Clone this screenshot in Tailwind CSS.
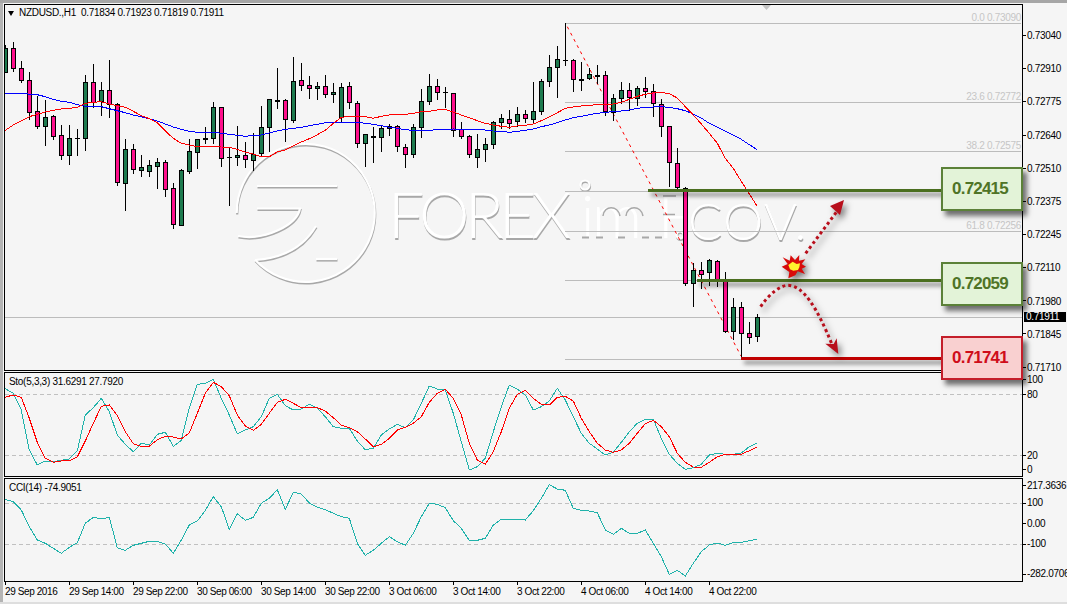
<!DOCTYPE html>
<html lang="en">
<head>
    <meta charset="UTF-8">
    <title>NZDUSD H1</title>
    <script src="https://cdn.jsdelivr.net/npm/@tailwindcss/browser@4"></script>
</head>
<body class="bg-[#f5f5f5] overflow-hidden">
<div class="relative w-[1067px] h-[604px] flex flex-col overflow-hidden text-[10px] leading-3 tracking-[-0.3px] text-black font-['Liberation_Sans',sans-serif]">
    <div class="h-[3px] bg-[#a6a6a6] shrink-0"></div>

    <div class="flex flex-1 border-l-[3px] border-[#b4b4b4] pt-px">
        <!-- panes -->
        <div class="w-[1019px] ml-px shrink-0 flex flex-col">
            <div class="h-[367px] border border-black pl-[3px] pt-[2px]">
                <div class="flex items-center gap-[5px] whitespace-pre">
                    <span class="w-0 h-0 border-x-[3.5px] border-x-transparent border-t-[5px] border-t-black"></span>
                    <span>NZDUSD.,H1  0.71834 0.71923 0.71819 0.71911</span>
                </div>
            </div>
            <div class="h-[105px] mt-px border border-black pl-1 pt-[3px]">Sto(5,3,3) 31.6291 27.7920</div>
            <div class="h-[104px] mt-px border border-black pl-1 pt-[3px]">CCI(14) -74.9051</div>
            <div class="flex pl-px pt-1 whitespace-nowrap tracking-[-0.4px]">
                <span class="w-16 shrink-0">29 Sep 2016</span>
                <span class="w-16 shrink-0">29 Sep 14:00</span>
                <span class="w-16 shrink-0">29 Sep 22:00</span>
                <span class="w-16 shrink-0">30 Sep 06:00</span>
                <span class="w-16 shrink-0">30 Sep 14:00</span>
                <span class="w-16 shrink-0">30 Sep 22:00</span>
                <span class="w-16 shrink-0">3 Oct 06:00</span>
                <span class="w-16 shrink-0">3 Oct 14:00</span>
                <span class="w-16 shrink-0">3 Oct 22:00</span>
                <span class="w-16 shrink-0">4 Oct 06:00</span>
                <span class="w-16 shrink-0">4 Oct 14:00</span>
                <span class="w-16 shrink-0">4 Oct 22:00</span>
            </div>
        </div>

        <!-- price axis -->
        <div class="flex-1 pl-[4px] whitespace-nowrap">
            <div class="h-[344px] mt-[26px] flex flex-col justify-between">
                <span>0.73040</span><span>0.72910</span><span>0.72775</span><span>0.72640</span>
                <span>0.72510</span><span>0.72375</span><span>0.72245</span><span>0.72110</span>
                <span>0.71980</span><span>0.71845</span><span>0.71710</span>
            </div>
            <div class="flex flex-col">
                <span>100</span>
                <span class="mt-[3px]">80</span>
                <span class="mt-[49px]">20</span>
                <span class="mt-[2px]">0</span>
                <span class="mt-[4px]">217.3636</span>
                <span class="mt-[5px]">100</span>
                <span class="mt-[9px]">0.00</span>
                <span class="mt-[8px]">-100</span>
                <span class="mt-[18px]">-282.0706</span>
            </div>
        </div>
    </div>

    <div class="h-[2px] bg-[#dedede] shrink-0"></div>

    <!-- chart drawing, in window coordinates -->
    <svg class="absolute top-0 left-0" width="1067" height="604" viewBox="0 0 1067 604" fill="none">
        <defs>
            <clipPath id="main-clip"><rect x="5" y="5" width="1017" height="365"></rect></clipPath>
            <clipPath id="low-clip"><rect x="5" y="373" width="1017" height="208"></rect></clipPath>
            <g id="mark" fill="none" stroke="currentColor" stroke-width="2.2">
                <path d="M236.7 213A69 69 0 1 1 255 259.7"></path>
                <path d="M257 186H337"></path>
                <path d="M257 208.5H300C297 225 265 241 238 236"></path>
                <path d="M316 226C305 245 285 258 255 260"></path>
                <path d="M316 259H337"></path>
                <circle cx="585" cy="185" r="4.5"></circle>
                <circle cx="680" cy="235" r="3.5"></circle>
                <g fill="currentColor" stroke="none" font-family="Lato" font-weight="300">
                    <text x="388" y="238" font-size="64" textLength="183">FOREX</text>
                    <text x="688" y="240" font-size="51" textLength="118">COV.</text>
                </g>
            </g>
        </defs>

        <use href="#mark" x="0.5" y="1.5" class="text-[#a8a8a8]"></use>
        <use href="#mark" class="text-white"></use>

        <!-- middle of the watermark: letters stay white, only their edges show -->
        <g fill="#fff" font-family="Lato" font-weight="300">
            <text x="581" y="238" font-size="60">i</text>
            <text x="592" y="238" font-size="62" textLength="60">m</text>
            <text x="658" y="238" font-size="60">F</text>
        </g>
        <g stroke="#a8a8a8" stroke-width="1.5">
            <path d="M603 216C604 205 618 205 620 216M626 216C627 205 641 205 643 216"></path>
            <path d="M663 196H676M663 214.5H675"></path>
            <path d="M582 237.5H589M596 237.5H603M618 237.5H625M642 237.5H649M655 237.5H662" stroke-width="2"></path>
        </g>

        <polygon points="762,5 771,5 766.5,10" fill="#c4c4c4"></polygon>

        <!-- fibo levels -->
        <g stroke="#bcbcbc" shape-rendering="crispEdges">
            <path d="M565 23.5H1021M565 102.5H1021M565 151.5H1021M565 191.5H1021M565 231.5H1021M565 280.5H1021M565 359.5H1021"></path>
            <path d="M5 317.5H1022"></path>
        </g>
        <g fill="#c6c6c6" text-anchor="end" class="whitespace-pre">
            <text x="1021" y="21">0.0  0.73090</text>
            <text x="1021" y="100">23.6 0.72772</text>
            <text x="1021" y="149">38.2 0.72575</text>
            <text x="1021" y="229">61.8 0.72256</text>
        </g>
        <path d="M567.3 26.7L741 356" stroke="#ff0000" stroke-dasharray="3 4"></path>

        <g id="candles" clip-path="url(#main-clip)"></g>
        <g id="lines"></g>
        <g id="ticks" stroke="#000" shape-rendering="crispEdges"></g>

        <!-- drawn levels and arrows -->
        <g class="drop-shadow-[3px_4px_2px_rgba(0,0,0,0.5)]">
            <rect x="648" y="189" width="293" height="3" fill="#4a6e1f"></rect>
            <rect x="697" y="279" width="244" height="3" fill="#4a6e1f"></rect>
            <rect x="741" y="357" width="200" height="3" fill="#c00000"></rect>
        </g>
        <g class="drop-shadow-[3px_4px_3px_rgba(0,0,0,0.5)]">
            <g transform="translate(640 170) scale(0.33333)">
                <path d="M497 250L600 112" stroke="#b80f1c" stroke-width="9" stroke-dasharray="9 9"></path>
                <path d="M362 410C385 375 420 345 445 346C490 348 530 410 578 528" stroke="#b80f1c" stroke-width="9" stroke-dasharray="9 9"></path>
                <polygon points="570,108 612,90 600,135" fill="#b80f1c"></polygon>
                <polygon points="556,521 581,522 590,505 595,552" fill="#b80f1c"></polygon>
                <polygon points="428,262 449,272 452,256 465,270 478,255 477,272 496,268 485,282 498,290 485,296 495,312 473,304 466,316 445,325 448,306 425,290 443,282" fill="#d80a0a"></polygon>
                <polygon points="445,285 458,275 470,282 480,280 478,292 474,300 460,302 450,298" fill="#fff12e"></polygon>
            </g>
        </g>
    </svg>

    <!-- current price tag -->
    <div class="absolute left-[1024px] top-[312px] w-[42px] h-[10px] bg-black text-white leading-[10px] pl-[2px]">0.71911</div>

    <!-- level boxes -->
    <div class="absolute left-[941px] top-[167px] w-[82px] h-[44px] flex items-center justify-center pr-1 border-2 border-[#5b8138] bg-[#e3f3d8] text-[#4f7427] text-[17px] font-bold tracking-[-0.8px] shadow-[4px_5px_5px_rgba(0,0,0,0.55)]">0.72415</div>
    <div class="absolute left-[941px] top-[262px] w-[82px] h-[44px] flex items-center justify-center pr-1 border-2 border-[#5b8138] bg-[#e3f3d8] text-[#4f7427] text-[17px] font-bold tracking-[-0.8px] shadow-[4px_5px_5px_rgba(0,0,0,0.55)]">0.72059</div>
    <div class="absolute left-[941px] top-[336px] w-[82px] h-[44px] flex items-center justify-center pr-1 border-2 border-[#c41e2a] bg-[#f9d0d0] text-[#cf0d1a] text-[17px] font-bold tracking-[-0.8px] shadow-[4px_5px_5px_rgba(0,0,0,0.55)]">0.71741</div>
</div>

<script>
    // high, body top, body bottom, low, colour (g green, p pink, k flat bar)
    const bars = [
        [45,48,72,72,'g'],[42,48,68,71,'p'],[61,68,80,82,'p'],[72,80,112,119,'p'],[96,111,126,128,'p'],
        [100,117,126,145,'g'],[115,116,136,139,'p'],[125,135,155,159,'p'],[125,138,155,164,'g'],[129,138,138,155,'k'],
        [75,82,138,150,'g'],[64,82,102,107,'p'],[82,90,101,115,'g'],[60,90,104,117,'p'],[103,104,182,185,'p'],
        [139,149,183,210,'g'],[144,149,169,173,'p'],[155,167,170,176,'g'],[160,165,171,176,'g'],[158,162,166,188,'g'],
        [160,162,189,196,'p'],[183,188,224,228,'p'],[169,170,225,225,'g'],[139,151,171,173,'g'],[139,139,152,168,'g'],
        [127,138,139,143,'k'],[102,107,138,143,'g'],[107,107,158,166,'p'],[147,157,157,205,'k'],[126,155,157,165,'g'],
        [142,155,159,167,'p'],[133,154,160,170,'g'],[106,127,153,155,'g'],[99,99,127,151,'g'],[68,100,101,108,'k'],
        [99,100,119,141,'p'],[57,81,120,122,'g'],[63,80,85,90,'p'],[76,85,88,98,'p'],[82,86,88,99,'g'],
        [75,86,94,97,'p'],[83,92,94,102,'g'],[83,87,117,122,'g'],[82,86,102,108,'p'],[101,103,143,147,'p'],
        [134,134,143,166,'g'],[127,136,137,162,'k'],[126,128,137,151,'g'],[124,126,128,135,'g'],[125,126,146,151,'p'],
        [144,147,154,167,'p'],[124,127,154,157,'g'],[89,101,127,137,'g'],[74,86,101,104,'g'],[79,86,92,99,'p'],
        [87,92,92,107,'k'],[93,93,130,136,'p'],[122,129,136,138,'p'],[135,136,154,157,'p'],[134,149,157,167,'g'],
        [138,144,149,161,'g'],[121,122,144,148,'g'],[114,118,122,128,'g'],[110,119,123,128,'p'],[107,114,121,126,'g'],
        [110,114,118,122,'p'],[82,111,119,123,'g'],[79,81,111,114,'g'],[55,67,81,86,'g'],[46,59,67,97,'g'],
        [23,60,60,65,'k'],[59,60,79,91,'p'],[62,79,80,90,'k'],[68,74,78,79,'g'],[65,75,76,83,'k'],
        [71,75,111,115,'p'],[94,98,112,120,'g'],[82,90,98,103,'g'],[83,90,97,110,'p'],[86,88,98,105,'g'],
        [77,88,91,97,'p'],[84,91,103,116,'p'],[99,104,126,136,'p'],[126,126,162,186,'p'],[148,163,187,190,'p'],
        [187,188,283,285,'p'],[263,270,283,306,'g'],[262,270,274,288,'p'],[259,260,272,285,'g'],[260,261,279,286,'p'],
        [272,280,331,332,'p'],[298,307,331,339,'g'],[302,307,333,358,'p'],[322,333,337,343,'p'],[314,317,336,341,'g']
    ];

    let candleSvg = '';
    bars.forEach(([hi, top, bot, lo, kind], i) => {
        const col = 5 + 8 * i;
        candleSvg += `<rect x="${col}" y="${hi}" width="1" height="${lo - hi + 1}" fill="#000" shape-rendering="crispEdges"/>`;
        if (kind === 'k') {
            candleSvg += `<rect x="${col - 2}" y="${top}" width="5" height="${bot - top + 1}" fill="#000" shape-rendering="crispEdges"/>`;
        } else {
            const fill = kind === 'g' ? '#1e7b4f' : '#ff0f8c';
            candleSvg += `<rect x="${col - 1.5}" y="${top + 0.5}" width="4" height="${bot - top}" fill="${fill}" stroke="#000" shape-rendering="crispEdges"/>`;
        }
    });
    document.getElementById('candles').innerHTML = candleSvg;

    // traced in 3x crop coordinates: [offset x, offset y, x, y, x, y, ...]
    function toPoints(parts) {
        const out = [];
        parts.forEach(([ox, oy, ...p]) => {
            for (let i = 0; i < p.length; i += 2) {
                out.push((ox + p[i] / 3).toFixed(1) + ',' + (oy + p[i + 1] / 3).toFixed(1));
            }
        });
        return out.join(' ');
    }

    const red = [
        [0,0, 14,392,40,375,64,362,88,350,112,343,136,336,160,331,184,327,208,325,232,322,256,310,280,307,304,305,328,312,352,317,376,322,400,334,424,347,448,356,472,368,496,393,520,415,544,430,568,435,592,440,616,440,640,440,664,441,688,442,712,448,736,456,760,462,784,470,808,470,832,456,856,450,880,438,904,426,928,416,952,404,976,391,1000,370,1024,352,1048,349,1072,349],
        [360,0, 16,350,40,355,64,349,88,345,112,344,136,343,160,340,184,335,208,334,232,330,256,328,280,336,304,345,328,353,352,362,376,370,400,375,424,379,448,382,472,378,496,376,520,372,544,362,568,350,592,338,616,325,640,321,664,318,688,316,712,314,736,313,760,312,784,307,808,298,832,289,856,283,880,279,904,277,928,281,952,294,976,320,1000,345,1024,372,1048,400],
        [640,0, 232,430,256,475,280,505,300,538,351,618]
    ];
    const blue = [
        [0,0, 14,281,40,281,80,281,88,283,112,284,136,290,160,298,184,304,208,307,232,314,256,319,280,318,304,320,328,326,352,332,376,338,400,345,424,350,448,356,472,363,496,372,520,381,544,388,568,394,592,397,616,397,640,397,664,400,688,403,712,406,736,409,760,406,784,405,808,399,832,393,856,388,880,385,904,382,928,377,952,373,976,368,1000,367,1024,367,1048,367,1072,367],
        [360,0, 16,370,40,373,64,377,88,382,112,385,136,389,160,391,184,393,208,391,232,389,256,388,280,387,304,388,328,388,352,388,376,390,400,393,424,394,448,397,472,394,496,391,520,387,544,380,568,375,592,368,616,360,640,353,664,349,688,344,712,340,736,337,760,335,784,333,808,330,832,325,856,322,880,321,904,320,928,322,952,326,976,332,1000,342,1024,354,1048,370],
        [640,0, 232,381,256,393,280,405,304,418,328,434,350,448]
    ];
    const stoMain = [
        [0,365, 14,70,40,85,64,135,88,255,112,300,136,288,160,290,184,286,208,282,232,258,256,150,280,128,304,100,328,140,352,210,376,238,400,260,424,235,448,240,472,208,496,202,520,244,544,226,568,130,592,58,616,55,640,43,664,100,688,150,712,207,736,195,760,185,784,155,808,100,832,88,856,122,880,135,904,132,928,118,952,130,976,155,1000,185,1024,190,1048,190,1072,228,1096,254,1120,250,1144,210,1168,192,1192,178],
        [400,365, 16,188,40,165,64,115,88,63,112,72,136,75,160,145,184,230,208,315,232,305,256,280,280,200,304,125,328,60,352,72,376,90,400,135,424,125,448,108,472,70,496,105,520,155,544,205,568,235,592,252,616,270,640,262,664,232,688,200,712,175,736,163,760,163,784,220,808,268,832,295,856,313,880,308,904,298,928,270,952,265,976,268,1000,268,1024,264,1048,245,1070,235]
    ];
    const stoSignal = [
        [0,365, 14,97,40,90,64,97,88,160,112,232,136,280,160,292,184,288,208,287,232,276,256,228,280,175,304,124,328,120,352,152,376,200,400,236,424,244,448,244,472,224,496,214,520,216,544,222,568,204,592,145,616,85,640,52,664,65,688,92,712,150,736,183,760,196,784,178,808,145,832,112,856,103,880,115,904,128,928,128,952,128,976,138,1000,158,1024,180,1048,188,1072,200,1096,222,1120,245,1144,238,1168,220,1192,195],
        [400,365, 16,187,40,175,64,155,88,112,112,85,136,73,160,100,184,150,208,235,232,285,256,298,280,260,304,200,328,130,352,88,376,76,400,100,424,118,448,120,472,97,496,94,520,108,544,160,568,200,592,235,616,255,640,262,664,255,688,235,712,205,736,176,760,166,784,185,808,215,832,265,856,292,880,306,904,307,928,292,952,275,976,268,1000,268,1024,268,1048,257,1070,247]
    ];
    const cci = [
        [0,365, 14,403,40,410,64,435,88,485,112,525,136,535,160,550,184,565,208,547,232,533,256,475,280,457,304,462,328,457,352,548,376,556,400,541,424,535,448,529,472,529,496,537,520,565,544,525,568,480,592,468,616,436,640,395,664,425,688,493,712,446,736,466,760,457,784,415,808,400,832,374,856,433,880,382,904,387,928,414,952,427,976,434,1000,445,1024,455,1048,460,1072,535,1096,571,1120,556,1144,535,1168,515,1192,530],
        [400,365, 16,541,40,505,64,455,88,415,112,418,136,428,160,467,184,490,208,526,232,526,256,520,280,480,304,463,328,465,352,463,376,465,400,437,424,400,448,359,472,372,496,376,520,430,544,436,568,438,592,443,616,495,640,508,664,490,688,505,712,505,736,495,760,535,784,575,808,628,832,616,856,633,880,595,904,560,928,540,952,534,976,541,1000,533,1024,532,1048,527,1070,523]
    ];

    const poly = (parts, stroke) => `<polyline points="${toPoints(parts)}" stroke="${stroke}" stroke-width="1" shape-rendering="crispEdges"/>`;
    document.getElementById('lines').innerHTML =
        `<g stroke="#c0c0c0" stroke-dasharray="4 3" shape-rendering="crispEdges"><path d="M5 394.5H1022M5 455.5H1022M5 503.5H1022M5 544.5H1022"/></g>` +
        `<g clip-path="url(#main-clip)">` + poly(blue, '#0000ff') + poly(red, '#ff0000') + `</g>` +
        `<g clip-path="url(#low-clip)">` + poly(stoMain, '#20b2aa') + poly(stoSignal, '#ff0000') + poly(cci, '#20b2aa') + `</g>`;

    let ticks = '';
    [35, 68, 101, 135, 168, 201, 234, 267, 300, 333, 367, 379, 394, 455, 469, 485, 503, 523, 544, 574].forEach(y => {
        ticks += `<path d="M1023 ${y + 0.5}H1026"/>`;
    });
    for (let k = 0; k < 12; k++) {
        ticks += `<path d="M${5.5 + 64 * k} 582V585"/>`;
    }
    document.getElementById('ticks').innerHTML = ticks;
</script>
</body>
</html>
